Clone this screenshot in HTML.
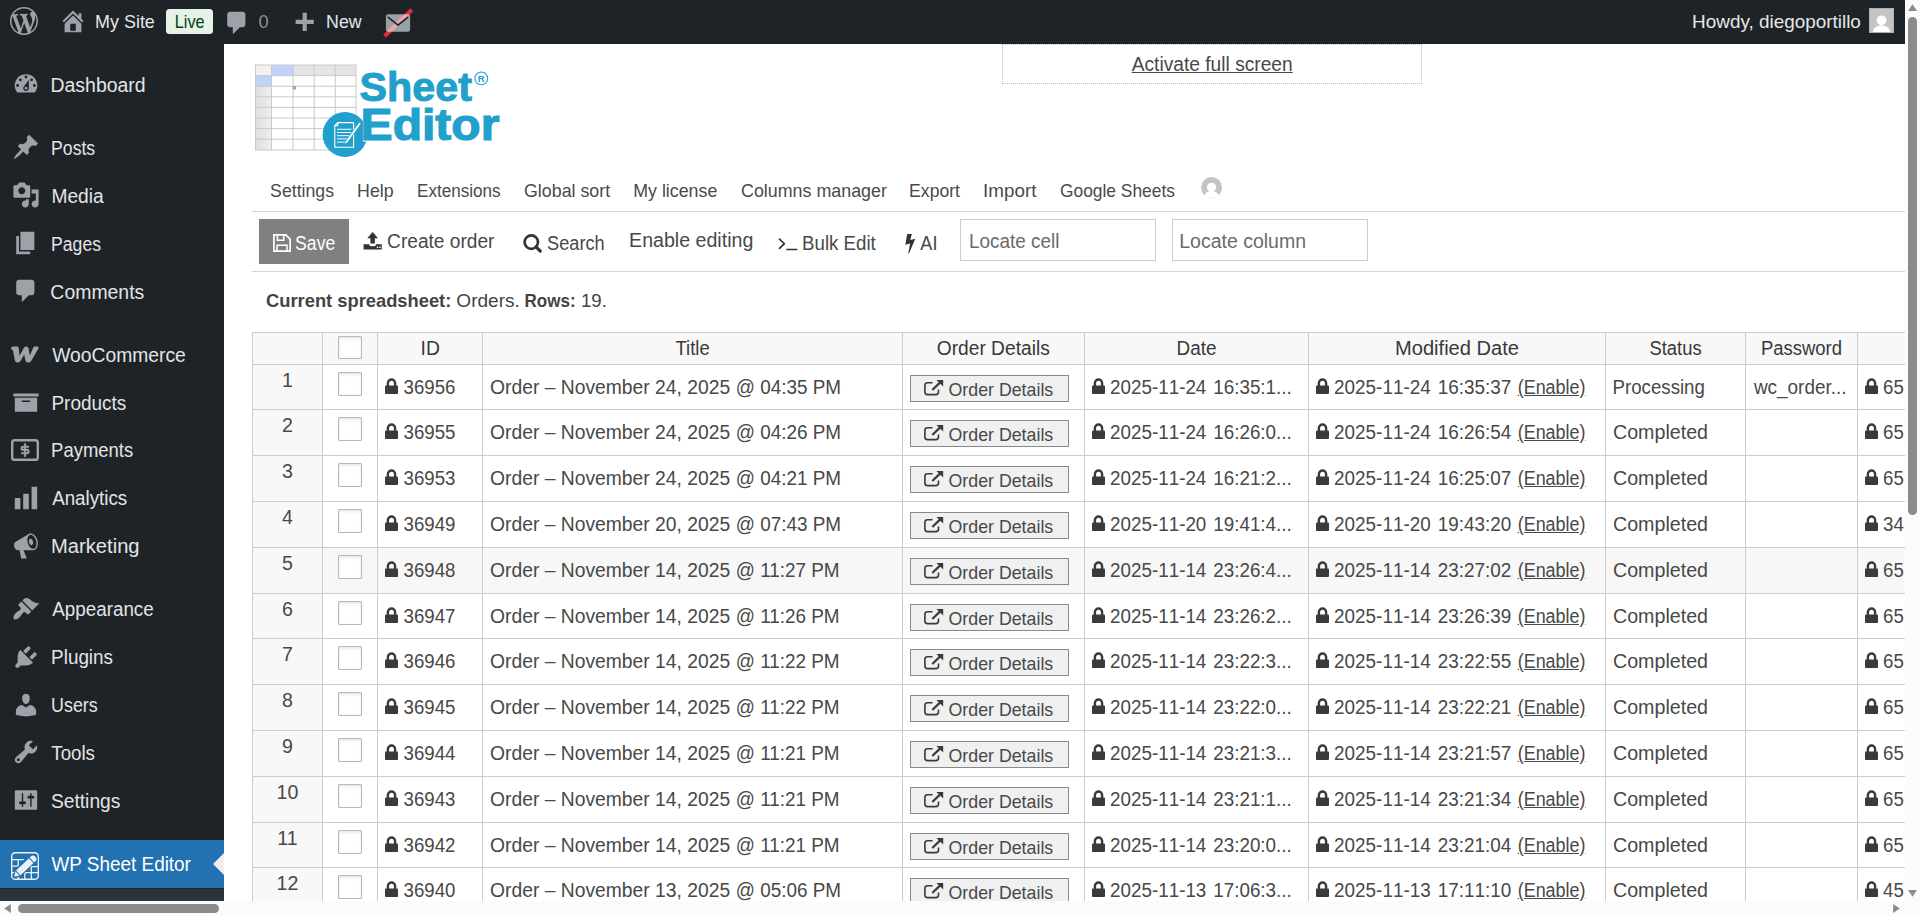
<!DOCTYPE html>
<html lang="en">
<head>
<meta charset="utf-8">
<title>WP Sheet Editor - Orders</title>
<style>
*{box-sizing:border-box}
html,body{margin:0;padding:0}
body{width:1920px;height:916px;overflow:hidden;position:relative;background:#fff;font-family:"Liberation Sans",sans-serif;color:#484848}
.ic{position:absolute;display:block}
#bar{position:absolute;left:0;top:0;width:1905px;height:44px;background:#1d2327;color:#e6e6e8;font-size:18.2px;line-height:44px;white-space:nowrap}
#bar span{position:absolute;top:0}
#bar .live{left:166px;top:9px;width:47px;height:25px;line-height:25px;border-radius:3.5px;background:#e6f2e8;color:#00450c;text-align:center}
#side{position:absolute;left:0;top:44px;width:224px;height:857px;background:#1d2327;overflow:hidden}
.mi{position:absolute;left:0;width:224px;height:47.88px;line-height:47.88px;color:#e4e4e6;font-size:19.6px;white-space:nowrap}
.mi span{position:absolute;left:50.6px;top:0}
.mi.act{color:#fff}
#actbg{position:absolute;left:0;top:796px;width:224px;height:48px;background:#2271b1}
.arr{position:absolute;right:0;top:12.7px;width:0;height:0;border:11.2px solid transparent;border-right-color:#f0f0f1;border-left-width:0}
#sub{position:absolute;left:0;top:844.5px;width:224px;height:20px;background:#2c3338}
#vs{position:absolute;left:1905px;top:0;width:15px;height:916px;background:#fbfbfb}
#hs{position:absolute;left:0;top:901px;width:1905px;height:15px;background:#fbfbfb}
.thumb{position:absolute;background:#8b8b8b;border-radius:5px}
#main{position:absolute;left:224px;top:44px;width:1681px;height:857px;overflow:hidden;background:#fff}
#main>*{position:absolute}
.nav{font-size:18.2px;line-height:22px;top:135px;color:#4a4a4a;white-space:nowrap}
.tl{font-size:19.6px;line-height:24px;color:#484848;white-space:nowrap}
.hl{left:28px;width:1660px;height:1px;background:#d5d5d5}
.inp{height:42px;width:196px;border:1px solid #ccc;background:#fff;font-size:19.6px;line-height:40px;color:#6a6a6a;padding-left:8px;white-space:nowrap}
#tbl{left:28px;top:288px;width:1653px;height:569px;border-left:1px solid #ccc;border-top:1px solid #ccc;overflow:hidden;font-size:19.6px;color:#484848}
.th{position:absolute;top:0;height:32px;background:#f8f8f8;border-right:1px solid #ccc;border-bottom:1px solid #ccc;text-align:center;line-height:29px;color:#383838;white-space:nowrap;overflow:hidden}
.tr{position:absolute;left:0;width:1700px}
.td,.rh{position:absolute;top:0;height:100%;border-right:1px solid #ccc;border-bottom:1px solid #ccc;white-space:nowrap;overflow:hidden;line-height:43px;padding-left:7px}
.rh{background:#f8f8f8;text-align:center;padding:0;line-height:30px;color:#484848}
.hov .td{background:#f7f7f7}
.cb{position:absolute;width:24px;height:23px;border:1px solid #b4b9be;background:#fff;border-radius:1px;box-shadow:inset 0 1.4px 2.8px rgba(0,0,0,.1)}
.lk{display:inline-block;vertical-align:-1px;margin-right:6px}
.btn{position:absolute;left:7px;top:10px;width:159px;height:27px;border:1px solid #8a8a8a;background:#f0f0f0;font-size:18.2px;line-height:26px;padding-left:38px}
.ex{position:absolute;left:13.2px;top:4.3px}
u{text-decoration:underline;text-underline-offset:1.3px}
.a4,.a5,.a1,.a8{font-kerning:none}
.a4,.a5{word-spacing:1.8px}
#b1{display:inline-block;transform:translate(-0.90px,0.00px) scaleX(0.9850);transform-origin:0 50%}
#b2{display:inline-block;transform:translate(0.00px,1.00px) scaleX(0.8935);transform-origin:50% 50%}
#b3{display:inline-block;transform:translate(0.00px,0.00px) scaleX(1.0000);transform-origin:0 50%}
#b4{display:inline-block;transform:translate(-0.90px,0.00px) scaleX(0.9765);transform-origin:0 50%}
#b5{display:inline-block;transform:translate(-0.90px,0.00px) scaleX(1.0389);transform-origin:0 50%}
#s1{display:inline-block;transform:translate(-0.45px,1.00px) scaleX(0.9911);transform-origin:0 50%}
#s2{display:inline-block;transform:translate(0.09px,1.00px) scaleX(0.8989);transform-origin:0 50%}
#s3{display:inline-block;transform:translate(0.45px,1.00px) scaleX(0.9794);transform-origin:0 50%}
#s4{display:inline-block;transform:translate(0.09px,1.00px) scaleX(0.8982);transform-origin:0 50%}
#s5{display:inline-block;transform:translate(-0.63px,1.00px) scaleX(0.9913);transform-origin:0 50%}
#s6{display:inline-block;transform:translate(1.17px,1.00px) scaleX(0.9843);transform-origin:0 50%}
#s7{display:inline-block;transform:translate(0.45px,1.00px) scaleX(0.9686);transform-origin:0 50%}
#s8{display:inline-block;transform:translate(0.09px,0.00px) scaleX(0.9426);transform-origin:0 50%}
#s9{display:inline-block;transform:translate(1.17px,0.00px) scaleX(0.9575);transform-origin:0 50%}
#s10{display:inline-block;transform:translate(0.09px,0.00px) scaleX(1.0283);transform-origin:0 50%}
#s11{display:inline-block;transform:translate(1.17px,0.00px) scaleX(0.9612);transform-origin:0 50%}
#s12{display:inline-block;transform:translate(0.09px,0.00px) scaleX(0.9635);transform-origin:0 50%}
#s13{display:inline-block;transform:translate(0.09px,0.00px) scaleX(0.9115);transform-origin:0 50%}
#s14{display:inline-block;transform:translate(0.27px,1.00px) scaleX(0.9551);transform-origin:0 50%}
#s15{display:inline-block;transform:translate(-0.09px,1.00px) scaleX(0.9813);transform-origin:0 50%}
#s16{display:inline-block;transform:translate(0.45px,0.00px) scaleX(0.9653);transform-origin:0 50%}
#n1{display:inline-block;transform:translate(-0.90px,1.00px) scaleX(0.9727);transform-origin:0 50%}
#n2{display:inline-block;transform:translate(-0.90px,1.00px) scaleX(0.9757);transform-origin:0 50%}
#n3{display:inline-block;transform:translate(-0.90px,1.00px) scaleX(0.9393);transform-origin:0 50%}
#n4{display:inline-block;transform:translate(0.00px,1.00px) scaleX(0.9798);transform-origin:0 50%}
#n5{display:inline-block;transform:translate(-1.80px,1.00px) scaleX(0.9790);transform-origin:0 50%}
#n6{display:inline-block;transform:translate(0.00px,1.00px) scaleX(0.9819);transform-origin:0 50%}
#n7{display:inline-block;transform:translate(-0.90px,1.00px) scaleX(0.9671);transform-origin:0 50%}
#n8{display:inline-block;transform:translate(-0.90px,1.00px) scaleX(1.0353);transform-origin:0 50%}
#n9{display:inline-block;transform:translate(0.00px,1.00px) scaleX(0.9553);transform-origin:0 50%}
#t1{display:inline-block;transform:translate(-0.90px,0.00px) scaleX(0.9003);transform-origin:0 50%}
#t2{display:inline-block;transform:translate(-0.90px,0.00px) scaleX(0.9758);transform-origin:0 50%}
#t3{display:inline-block;transform:translate(-0.90px,0.00px) scaleX(0.9275);transform-origin:0 50%}
#t4{display:inline-block;transform:translate(-0.90px,0.00px) scaleX(1.0003);transform-origin:0 50%}
#t5{display:inline-block;transform:translate(-0.90px,0.00px) scaleX(0.9532);transform-origin:0 50%}
#t6{display:inline-block;transform:translate(-0.63px,0.00px) scaleX(0.9228);transform-origin:0 50%}
#i1{display:inline-block;line-height:normal;transform:translate(0.00px,1.00px) scaleX(0.9644);transform-origin:0 50%}
#i2{display:inline-block;line-height:normal;transform:translate(-1.80px,1.00px) scaleX(0.9954);transform-origin:0 50%}
#c1{display:inline-block;line-height:normal;transform:translate(0.00px,1.00px) scaleX(1.0075);transform-origin:0 50%}
#c2{display:inline-block;line-height:normal;transform:translate(1.35px,1.00px) scaleX(1.0476);transform-origin:0 50%}
#c3{display:inline-block;line-height:normal;transform:translate(3.60px,1.00px) scaleX(0.9334);transform-origin:0 50%}
#c4{display:inline-block;line-height:normal;transform:translate(0.90px,1.00px) scaleX(1.0258);transform-origin:0 50%}
#afs{display:inline-block;line-height:normal;transform:translate(0.00px,0.00px) scaleX(0.9789);transform-origin:50% 50%}
#h2{display:inline-block;line-height:normal;transform:translate(0.45px,1.00px) scaleX(0.9863);transform-origin:50% 50%}
#h3{display:inline-block;line-height:normal;transform:translate(0.45px,1.00px) scaleX(0.9383);transform-origin:50% 50%}
#h4{display:inline-block;line-height:normal;transform:translate(-0.45px,1.00px) scaleX(0.9788);transform-origin:50% 50%}
#h5{display:inline-block;line-height:normal;transform:translate(-0.22px,1.00px) scaleX(0.9634);transform-origin:50% 50%}
#h6{display:inline-block;line-height:normal;transform:translate(-0.45px,1.00px) scaleX(1.0254);transform-origin:50% 50%}
#h7{display:inline-block;line-height:normal;transform:translate(-0.22px,1.00px) scaleX(0.9383);transform-origin:50% 50%}
#h8{display:inline-block;line-height:normal;transform:translate(0.45px,1.00px) scaleX(0.9424);transform-origin:50% 50%}
.a1{display:inline-block;line-height:normal;transform:translate(-0.45px,1.00px) scaleX(0.9525);transform-origin:0 50%}
.a8{display:inline-block;line-height:normal;transform:translate(-0.95px,1.00px) scaleX(0.9525);transform-origin:0 50%}
.a2{display:inline-block;line-height:normal;transform:translate(-0.00px,1.00px) scaleX(0.9843);transform-origin:0 50%}
.a3{display:inline-block;line-height:normal;transform:translate(-0.45px,1.00px) scaleX(0.9769);transform-origin:0 50%}
.a4{display:inline-block;line-height:normal;transform:translate(-0.90px,1.00px) scaleX(0.9601);transform-origin:0 50%}
.a5{display:inline-block;line-height:normal;transform:translate(-0.90px,1.00px) scaleX(0.9638);transform-origin:0 50%}
.a6p{display:inline-block;line-height:normal;transform:translate(-0.45px,1.00px) scaleX(0.9526);transform-origin:0 50%}
.a6{display:inline-block;line-height:normal;transform:translate(0.00px,1.00px) scaleX(1.0028);transform-origin:0 50%}
.a7{display:inline-block;line-height:normal;transform:translate(0.90px,1.00px) scaleX(0.9660);transform-origin:0 50%}
.a5e{display:inline-block;line-height:normal;transform:translate(-6.30px,1.00px) scaleX(0.9156);transform-origin:0 50%}
.a2b{display:inline-block;line-height:normal;transform:translate(-3.24px,1.00px) scaleX(0.9635);transform-origin:0 50%}
</style>
</head>
<body>
<div id="bar">
<svg class="ic" style="left:9.8px;top:7px" width="28" height="28" viewBox="0 0 20 20"><path fill="#9ca2a7" d="M20 10c0-5.51-4.49-10-10-10C4.48 0 0 4.49 0 10c0 5.52 4.48 10 10 10 5.51 0 10-4.48 10-10zM7.78 15.37L4.37 6.22c.55-.02 1.17-.08 1.17-.08.5-.06.44-1.13-.06-1.11 0 0-1.45.11-2.37.11-.18 0-.37 0-.58-.01C4.12 2.69 6.87 1.11 10 1.11c2.33 0 4.45.87 6.05 2.34-.68-.11-1.65.39-1.65 1.58 0 .74.45 1.36.9 2.1.35.61.55 1.36.55 2.46 0 1.49-1.4 5-1.4 5l-3.03-8.37c.54-.02.82-.17.82-.17.5-.05.44-1.25-.06-1.22 0 0-1.44.12-2.38.12-.87 0-2.33-.12-2.33-.12-.5-.03-.56 1.2-.06 1.22l.92.08 1.26 3.41zM17.41 10c.24-.64.74-1.87.43-4.25.7 1.29 1.05 2.71 1.05 4.25 0 3.29-1.73 6.24-4.4 7.78.97-2.59 1.94-5.2 2.92-7.78zM6.1 18.09C3.12 16.65 1.11 13.53 1.11 10c0-1.3.23-2.48.72-3.59C3.25 10.3 4.67 14.2 6.1 18.09zm4.03-6.63l2.58 6.98c-.86.29-1.76.45-2.71.45-.79 0-1.57-.11-2.29-.33.81-2.38 1.62-4.74 2.42-7.1z"/></svg>
<svg class="ic" style="left:58.8px;top:6.8px" width="28" height="28" viewBox="0 0 20 20"><path fill="#9ca2a7" d="M16 8.5l1.53 1.53-1.06 1.06L10 4.62l-6.47 6.47-1.06-1.06L10 2.5l4 4v-2h2v4zm-6-2.46l6 5.99V18H4v-5.97zM12 17v-5H8v5h4z"/></svg>
<span id="b1" style="left:95.5px">My Site</span>
<span class="live"><span id="b2" style="position:static">Live</span></span>
<svg class="ic" style="left:222.6px;top:9.1px" width="28" height="28" viewBox="0 0 20 20"><path fill="#9ca2a7" d="M5 2h9c1.1 0 2 .9 2 2v7c0 1.1-.9 2-2 2h-2l-5 5v-5H5c-1.1 0-2-.9-2-2V4c0-1.1.9-2 2-2z"/></svg>
<span id="b3" style="left:258.5px;color:#8c8f92">0</span>
<svg class="ic" style="left:290.3px;top:10.2px" width="28" height="28" viewBox="0 0 20 20"><path fill="#9ca2a7" d="M17 7v3h-5v5H9v-5H4V7h5V2h3v5h5z"/></svg>
<span id="b4" style="left:326.5px">New</span>
<svg class="ic" style="left:380px;top:6px" width="36" height="34" viewBox="380 6 36 34"><path d="M384.600 36.200L411.800 9.700" stroke="#e02f34" stroke-width="4.200" fill="none"/><rect x="385.900" y="14.200" width="24.200" height="17.500" rx="2.200" fill="rgba(240,246,252,.6)"/><path d="M388.300 17.400L398 25.200L407.700 17.400" fill="none" stroke="#1d2327" stroke-width="1.700" stroke-linecap="round" stroke-linejoin="round"/></svg>
<span id="b5" style="left:1692.5px">Howdy, diegoportillo</span>
<svg class="ic" style="left:1869px;top:8px" width="25" height="25" viewBox="0 0 25 25"><rect width="25" height="25" fill="#c4c4c4"/><circle cx="12.5" cy="12.3" r="4.9" fill="#fff"/><path d="M3.8 25c0-5.2 3.6-7.6 8.7-7.6s8.7 2.4 8.7 7.6z" fill="#fff"/><rect x=".5" y=".5" width="24" height="24" fill="none" stroke="#b0b0b0"/></svg>
</div>
<div id="side">
<div id="sub"></div><div id="actbg"></div>
<div class="mi" style="top:16.80px"><svg class="ic" style="left:11.5px;top:9.04px" width="28" height="28" viewBox="0 0 20 20"><path fill="#9ca2a7" d="M3.76 16h12.48A7.998 7.998 0 0 0 10 3a7.998 7.998 0 0 0-6.24 13zM10 4c.55 0 1 .45 1 1s-.45 1-1 1-1-.45-1-1 .45-1 1-1zM6 6c.55 0 1 .45 1 1s-.45 1-1 1-1-.45-1-1 .45-1 1-1zm8 0c.55 0 1 .45 1 1s-.45 1-1 1-1-.45-1-1 .45-1 1-1zm-5.37 5.55L12 7v6c0 1.1-.9 2-2 2s-2-.9-2-2c0-.57.24-1.08.63-1.45zM4 10c.55 0 1 .45 1 1s-.45 1-1 1-1-.45-1-1 .45-1 1-1zm12 0c.55 0 1 .45 1 1s-.45 1-1 1-1-.45-1-1 .45-1 1-1zm-5 3c0-.55-.45-1-1-1s-1 .45-1 1 .45 1 1 1 1-.45 1-1z"/></svg><span id="s1">Dashboard</span></div>
<div class="mi" style="top:80.08px"><svg class="ic" style="left:11.5px;top:9.04px" width="28" height="28" viewBox="0 0 20 20"><path fill="#9ca2a7" d="M10.44 3.02l1.82-1.82 6.36 6.35-1.83 1.82c-1.05-.68-2.48-.57-3.41.36l-.75.75c-.92.93-1.04 2.35-.35 3.41l-1.83 1.82-2.41-2.41-2.8 2.79c-.42.42-3.38 2.71-3.8 2.29s1.86-3.39 2.28-3.81l2.79-2.79L4.1 9.36l1.83-1.82c1.05.69 2.48.57 3.4-.36l.75-.75c.93-.92 1.05-2.35.36-3.41z"/></svg><span id="s2">Posts</span></div>
<div class="mi" style="top:127.96px"><svg class="ic" style="left:11.5px;top:9.04px" width="28" height="28" viewBox="0 0 20 20"><path fill="#9ca2a7" d="M13 11V4c0-.55-.45-1-1-1h-1.67L9 1H5L3.67 3H2c-.55 0-1 .45-1 1v7c0 .55.45 1 1 1h10c.55 0 1-.45 1-1zM7 4.5c1.38 0 2.5 1.12 2.5 2.5S8.38 9.5 7 9.5 4.5 8.38 4.5 7 5.62 4.5 7 4.5zM14 6h5v10.5c0 1.38-1.12 2.5-2.5 2.5S14 17.88 14 16.5s1.12-2.5 2.5-2.5c.17 0 .34.02.5.05V9h-3V6zm-4 8.05V13h2v3.5c0 1.38-1.12 2.5-2.5 2.5S7 17.88 7 16.5 8.12 14 9.5 14c.17 0 .34.02.5.05z"/></svg><span id="s3">Media</span></div>
<div class="mi" style="top:175.84px"><svg class="ic" style="left:11.5px;top:9.04px" width="28" height="28" viewBox="0 0 20 20"><path fill="#9ca2a7" d="M6 15V2h10v13H6zm-1 1h8v2H3V5h2v11z"/></svg><span id="s4">Pages</span></div>
<div class="mi" style="top:223.72px"><svg class="ic" style="left:11.5px;top:9.04px" width="28" height="28" viewBox="0 0 20 20"><path fill="#9ca2a7" d="M5 2h9c1.1 0 2 .9 2 2v7c0 1.1-.9 2-2 2h-2l-5 5v-5H5c-1.1 0-2-.9-2-2V4c0-1.1.9-2 2-2z"/></svg><span id="s5">Comments</span></div>
<div class="mi" style="top:287.00px"><svg class="ic" style="left:11px;top:15.44px" width="28" height="17" viewBox="0 0 28 17"><path fill="#9ca2a7" d="M2.2 0.4 C0.9 0.4 0 1.3 0.1 2.5 C0.2 3.3 0.7 3.9 1.5 4.1 L2.0 4.2 L3.6 13.2 C3.9 15.2 5.0 16.6 6.8 16.6 C8.3 16.6 9.3 15.7 10.2 14.1 L13.2 8.4 L14.2 13.4 C14.6 15.4 15.6 16.6 17.3 16.6 C18.9 16.6 19.9 15.7 20.8 14.0 L27.4 2.6 C28.0 1.4 27.4 0.4 26.1 0.4 L24.2 0.4 C23.2 0.4 22.6 0.8 22.2 1.7 L18.8 9.6 L17.6 2.6 C17.3 1.1 16.5 0.4 15.2 0.4 C14.1 0.4 13.3 0.9 12.7 2.0 L8.6 9.8 L7.8 2.2 C7.7 1.0 7.0 0.4 5.8 0.4 Z"/></svg><span id="s6">WooCommerce</span></div>
<div class="mi" style="top:334.88px"><svg class="ic" style="left:11.5px;top:9.04px" width="28" height="28" viewBox="0 0 20 20"><path fill="#9ca2a7" d="M19 4v2H1V4h18zM2 7h16v10H2V7zm11 3V9H7v1h6z"/></svg><span id="s7">Products</span></div>
<div class="mi" style="top:382.76px"><svg class="ic" style="left:11px;top:12.74px" width="28" height="22" viewBox="0 0 28 22"><rect x="1.2" y="1.2" width="25.6" height="19.6" rx="2.4" fill="none" stroke="#9ca2a7" stroke-width="2.4"/><path d="M17.9 7.7H12.3Q10.6 7.7 10.6 9.3Q10.6 10.9 12.3 10.9H15.9Q17.6 10.9 17.6 12.6Q17.6 14.3 15.9 14.3H10.1" fill="none" stroke="#9ca2a7" stroke-width="2.1"/><path d="M14.1 4.3V17.9" stroke="#9ca2a7" stroke-width="1.9"/></svg><span id="s8">Payments</span></div>
<div class="mi" style="top:430.64px"><svg class="ic" style="left:11.5px;top:9.04px" width="28" height="28" viewBox="0 0 20 20"><path fill="#9ca2a7" d="M18 18V2h-4v16h4zm-6 0V7H8v11h4zm-6 0v-8H2v8h4z"/></svg><span id="s9">Analytics</span></div>
<div class="mi" style="top:478.52px"><svg class="ic" style="left:11.5px;top:9.04px" width="28" height="28" viewBox="0 0 20 20"><path fill="#9ca2a7" d="M18.15 5.94c.46 1.62.38 3.22-.02 4.48-.42 1.28-1.26 2.18-2.3 2.48-.16.06-.26.06-.4.06-.06.02-.12.02-.18.02-.06.02-.14.02-.22.02h-6.8l2.22 5.5c.02.14-.06.26-.14.34-.08.1-.24.16-.34.16H6.95c-.1 0-.26-.06-.34-.16-.08-.08-.16-.2-.14-.34l-1-5.5H4.25l-.02-.02c-.5.06-1.08-.18-1.54-.62s-.88-1.08-1.06-1.88c-.24-.8-.2-1.56-.02-2.2.18-.62.58-1.08 1.06-1.3l.02-.02 9-5.4c.1-.06.18-.1.24-.16.06-.04.14-.08.24-.12.16-.08.28-.12.5-.18 1.04-.3 2.24.1 3.22.98s1.84 2.24 2.26 3.86zm-2.58 5.98h-.02c.4-.1.74-.34 1.04-.7.58-.7.86-1.76.86-3.04 0-.64-.1-1.3-.28-1.98-.34-1.36-1.02-2.5-1.78-3.24s-1.68-1.1-2.46-.88c-.82.22-1.4.96-1.7 2-.32 1.04-.28 2.36.06 3.72.38 1.36 1 2.5 1.8 3.24.78.74 1.62 1.1 2.48.88zm-2.54-7.08c.22-.04.42-.02.62.04.38.16.76.48 1.02 1s.42 1.2.42 1.78c0 .3-.04.56-.12.8-.18.48-.44.84-.86.94-.34.1-.8-.06-1.14-.4s-.64-.86-.78-1.5c-.18-.62-.12-1.24.02-1.72s.48-.84.82-.94z"/></svg><span id="s10">Marketing</span></div>
<div class="mi" style="top:541.80px"><svg class="ic" style="left:11.5px;top:9.04px" width="28" height="28" viewBox="0 0 20 20"><path fill="#9ca2a7" d="M14.48 11.06L7.41 3.99l1.5-1.5c.5-.56 2.3-.47 3.51.32 1.21.8 1.43 1.28 2.91 2.1 1.18.64 2.45 1.26 4.45.85zm-.71.71L6.7 4.7 4.93 6.47c-.39.39-.39 1.02 0 1.41l1.06 1.06c.39.39.39 1.03 0 1.42-.6.6-1.43 1.11-2.21 1.69-.35.26-.7.53-1.01.84C1.43 14.23.4 16.08 1.4 17.07c.99 1 2.84-.03 4.18-1.36.31-.31.58-.66.85-1.02.57-.78 1.08-1.61 1.69-2.21.39-.39 1.02-.39 1.41 0l1.06 1.06c.39.39 1.02.39 1.41 0z"/></svg><span id="s11">Appearance</span></div>
<div class="mi" style="top:589.68px"><svg class="ic" style="left:11.5px;top:9.04px" width="28" height="28" viewBox="0 0 20 20"><path fill="#9ca2a7" d="M13.11 4.36L9.87 7.6 8 5.73l3.24-3.24c.35-.34 1.05-.2 1.56.32.52.51.66 1.21.31 1.55zm-8 1.77l.91-1.12 9.01 9.01-1.19.84c-.71.71-2.63 1.16-3.82 1.16H6.14L4.9 17.26c-.59.59-1.54.59-2.12 0-.59-.58-.59-1.53 0-2.12l1.24-1.24v-3.88c0-1.13.4-3.19 1.09-3.89zm7.26 3.97l3.24-3.24c.34-.35 1.04-.21 1.55.31.52.51.66 1.21.31 1.55l-3.24 3.25z"/></svg><span id="s12">Plugins</span></div>
<div class="mi" style="top:637.56px"><svg class="ic" style="left:11.5px;top:9.04px" width="28" height="28" viewBox="0 0 20 20"><path fill="#9ca2a7" d="M10 9.25c-2.27 0-2.73-3.44-2.73-3.44C7 4.02 7.82 2 9.97 2c2.16 0 2.98 2.02 2.71 3.81 0 0-.41 3.44-2.68 3.44zm0 2.57L12.72 10c2.39 0 4.52 2.33 4.52 4.53v2.49s-3.65 1.13-7.24 1.13c-3.65 0-7.24-1.13-7.24-1.13v-2.49c0-2.25 1.94-4.48 4.47-4.48z"/></svg><span id="s13">Users</span></div>
<div class="mi" style="top:685.44px"><svg class="ic" style="left:11.5px;top:9.04px" width="28" height="28" viewBox="0 0 20 20"><path fill="#9ca2a7" d="M16.68 9.77c-1.34 1.34-3.3 1.67-4.95.99l-5.41 6.52c-.99.99-2.59.99-3.58 0s-.99-2.59 0-3.57l6.52-5.42c-.68-1.65-.35-3.61.99-4.95 1.28-1.28 3.12-1.62 4.72-1.06l-2.89 2.89 2.82 2.82 2.86-2.87c.53 1.58.18 3.39-1.08 4.65zM3.81 16.21c.4.39 1.04.39 1.43 0 .4-.4.4-1.04 0-1.43-.39-.4-1.03-.4-1.43 0-.39.39-.39 1.03 0 1.43z"/></svg><span id="s14">Tools</span></div>
<div class="mi" style="top:733.32px"><svg class="ic" style="left:11.5px;top:9.04px" width="28" height="28" viewBox="0 0 20 20"><path fill="#9ca2a7" d="M18 16V4c0-.55-.45-1-1-1H3c-.55 0-1 .45-1 1v12c0 .55.45 1 1 1h14c.55 0 1-.45 1-1zM8 11h1c.55 0 1 .45 1 1s-.45 1-1 1H8v1.5c0 .28-.22.5-.5.5s-.5-.22-.5-.5V13H6c-.55 0-1-.45-1-1s.45-1 1-1h1V5.5c0-.28.22-.5.5-.5s.5.22.5.5V11zm5-2h-1c-.55 0-1-.45-1-1s.45-1 1-1h1V5.5c0-.28.22-.5.5-.5s.5.22.5.5V7h1c.55 0 1 .45 1 1s-.45 1-1 1h-1v5.5c0 .28-.22.5-.5.5s-.5-.22-.5-.5V9z"/></svg><span id="s15">Settings</span></div>
<div class="mi act" style="top:796.60px"><svg class="ic" style="left:11px;top:10.94px" width="28" height="28" viewBox="0 0 28 28"><rect x="0.7" y="0.7" width="26.6" height="26.6" rx="3.6" fill="none" stroke="#f0f0f1" stroke-width="1.4"/><g stroke="#f0f0f1" stroke-width="1.3" fill="none"><path d="M1 7.600H12.700M1 14.200H6.500M20.300 14.600H27M1 20.700H3.200M27 20.700H15Q13.750 20.700 13.750 22V27M7.200 7.600V14.200M7.200 25V27M20.300 14.600V27"/></g><g transform="translate(3.3,24.6) rotate(-43.3)" fill="#f0f0f1" stroke="#2271b1" stroke-width="1.7" paint-order="stroke"><path d="M0 0L4.600 -3.300V3.300Z"/><rect x="5.500" y="-3.300" width="17.800" height="6.600"/><path d="M24.200 -3.300H26A3 3.300 0 0 1 26 3.300H24.200Z"/></g></svg><span id="s16">WP Sheet Editor</span><i class="arr"></i></div>
</div>
<div id="main">
<!-- logo -->
<svg style="left:28px;top:16px" width="260" height="100" viewBox="252 60 260 100">
<defs><linearGradient id="g1" x1="0" x2="1" y1="0" y2="0"><stop offset="0" stop-color="#dedede"/><stop offset="1" stop-color="#efefef"/></linearGradient></defs>
<rect x="255.5" y="65" width="100.5" height="85" fill="#fff"/>
<rect x="255.5" y="65" width="16" height="85" fill="url(#g1)"/>
<rect x="271.5" y="65" width="84.5" height="10.6" fill="#e4e4e4"/>
<rect x="255.5" y="65" width="16" height="10.6" fill="#f1f1f1"/>
<rect x="271.5" y="65" width="21.6" height="10.6" fill="#bfd2f8"/>
<rect x="255.5" y="75.6" width="16" height="10.6" fill="#bfd2f8"/>
<g stroke="#c9c9c9" stroke-width="1" fill="none">
<path d="M255.5 75.6H356M255.5 86.2H356M255.5 96.8H356M255.5 107.4H356M255.5 118H356M255.5 128.6H356M255.5 139.2H356"/>
<path d="M271.5 65V150M293.1 65V150M314.2 65V150M335.3 65V150"/>
<rect x="255.5" y="65" width="100.5" height="85"/>
</g>
<rect x="292.6" y="86" width="3.4" height="3.6" fill="#a9a9a9"/>
<circle cx="345" cy="134.5" r="22.4" fill="#21a0cb"/>
<g fill="none" stroke="#fff" stroke-width="1.1"><path d="M337.8 122.6H353.6V147.2H334.8V125.6Z"/><path d="M337.8 122.6V125.6H334.8"/><path d="M337 129.3H351.5M337 132.5H351.5M337 135.7H351.5M337 138.9H349M337 142.1H346" stroke-width="1"/></g>
<path d="M359.2 122.2L361.2 123.5L347.6 142.6L344.6 144.6L345.3 141.2Z" fill="#fff" stroke="#21a0cb" stroke-width=".8"/>
<text x="359.6" y="100.7" font-family="Liberation Sans, sans-serif" font-weight="700" font-size="40" fill="#21a0cb" stroke="#21a0cb" stroke-width="1" textLength="112.3" lengthAdjust="spacingAndGlyphs">Sheet</text>
<rect x="362.9" y="107.6" width="10" height="34" fill="#fff"/>
<text x="360.6" y="140.1" font-family="Liberation Sans, sans-serif" font-weight="700" font-size="44.5" fill="#21a0cb" textLength="138.8" lengthAdjust="spacingAndGlyphs" stroke="#21a0cb" stroke-width="1.2">Editor</text>
<circle cx="481.3" cy="78.4" r="6.4" fill="none" stroke="#21a0cb" stroke-width="1.1"/>
<text x="481.3" y="82" text-anchor="middle" font-family="Liberation Sans, sans-serif" font-weight="700" font-size="9.5" fill="#21a0cb">R</text>
</svg>
<!-- full screen -->
<div style="left:778px;top:0;width:420px;height:40px;border:1px dotted #bdbdbd;text-align:center;font-size:19.6px;line-height:38px;color:#484848"><u id="afs">Activate full screen</u></div>
<!-- nav -->
<span class="nav" style="left:46.5px" id="n1">Settings</span>
<span class="nav" style="left:134px" id="n2">Help</span>
<span class="nav" style="left:193.5px" id="n3">Extensions</span>
<span class="nav" style="left:300px" id="n4">Global sort</span>
<span class="nav" style="left:410.5px" id="n5">My license</span>
<span class="nav" style="left:517px" id="n6">Columns manager</span>
<span class="nav" style="left:686px" id="n7">Export</span>
<span class="nav" style="left:760px" id="n8">Import</span>
<span class="nav" style="left:836px" id="n9">Google Sheets</span>
<svg style="left:977px;top:133px" width="21" height="21" viewBox="0 0 21 21"><defs><clipPath id="cc"><circle cx="10.5" cy="10.5" r="10.5"/></clipPath></defs><g clip-path="url(#cc)"><rect width="21" height="21" fill="#c4c4c4"/><circle cx="10.5" cy="10.300" r="4.600" fill="#fff"/><path d="M2.500 22c0-5.400 3.500-8 8-8s8 2.600 8 8z" fill="#fff"/></g></svg>
<div class="hl" style="top:167px"></div>
<!-- toolbar -->
<div style="left:35px;top:175px;width:90px;height:45px;background:#808080"></div>
<svg style="left:48.5px;top:190px" width="18" height="18" viewBox="0 0 18 18"><path fill="none" stroke="#fff" stroke-width="1.7" d="M0.9 0.9H12.9L17.1 5.1V17.1H0.9Z"/><path fill="none" stroke="#fff" stroke-width="1.5" d="M4.4 1V6.2H10.8V1M4 17V11.2H14V17"/></svg>
<span class="tl" style="left:71.5px;top:186.5px;color:#fff" id="t1">Save</span>
<svg style="left:139px;top:188px" width="19.3" height="17.8" viewBox="0 0 20 18" preserveAspectRatio="none"><path fill="#333" d="M10 0L15.6 6.2H12.3V11.6H7.7V6.2H4.4ZM0.6 12.4H6.4C6.6 13.6 7.4 14.4 8.6 14.4H11.4C12.6 14.4 13.4 13.6 13.6 12.400H19.4V17.6H0.6ZM14.300 14.700V16.100H15.700V14.700ZM16.800 14.700V16.100H18.200V14.700Z"/></svg>
<span class="tl" style="left:163.5px;top:184.5px" id="t2">Create order</span>
<svg style="left:299px;top:190px" width="19" height="19" viewBox="0 0 19 19"><circle cx="8.3" cy="8.1" r="6.7" fill="none" stroke="#333" stroke-width="2.7"/><path d="M13 12.800L17.300 17.100" stroke="#333" stroke-width="3.100" stroke-linecap="round"/></svg>
<span class="tl" style="left:323.5px;top:186.5px" id="t3">Search</span>
<span class="tl" style="left:406px;top:183.5px" id="t4">Enable editing</span>
<svg style="left:554px;top:193px" width="20" height="14" viewBox="0 0 20 14"><path d="M1 1.6L6.3 6.700L1 11.800M8.300 12.500H19.300" fill="none" stroke="#333" stroke-width="1.7"/></svg>
<span class="tl" style="left:579px;top:186.5px" id="t5">Bulk Edit</span>
<svg style="left:680.5px;top:190px" width="11" height="20" viewBox="0 0 11 20"><path fill="#333" d="M2.200 0L6.800 0 5.300 6 10.300 4.700 4 19.600 3.300 19.300 5.100 9.400 0.300 10.700Z"/></svg>
<span class="tl" style="left:697px;top:186.5px" id="t6">AI</span>
<div class="inp" style="left:736px;top:175px"><span id="i1">Locate cell</span></div>
<div class="inp" style="left:948px;top:175px"><span id="i2">Locate column</span></div>
<div class="hl" style="top:227px"></div>
<span style="left:42px;top:245px;font-size:18.2px;line-height:22px;white-space:nowrap;color:#444" id="cs"><b id="c1">Current spreadsheet:</b> <span id="c2">Orders.</span> <b id="c3">Rows:</b> <span id="c4">19.</span></span>
<!-- table -->
<div id="tbl">
<div class="th" style="left:0px;width:70px"></div>
<div class="th" style="left:70px;width:55px"><i class="cb" style="left:15px;top:3px"></i></div>
<div class="th" style="left:125px;width:105px"><span id="h2">ID</span></div>
<div class="th" style="left:230px;width:420px"><span id="h3">Title</span></div>
<div class="th" style="left:650px;width:182px"><span id="h4">Order Details</span></div>
<div class="th" style="left:832px;width:224px"><span id="h5">Date</span></div>
<div class="th" style="left:1056px;width:297px"><span id="h6">Modified Date</span></div>
<div class="th" style="left:1353px;width:140px"><span id="h7">Status</span></div>
<div class="th" style="left:1493px;width:112px"><span id="h8">Password</span></div>
<div class="th" style="left:1605px;width:60px"></div>
<div class="tr" style="top:32px;height:45px"><div class="rh" style="left:0;width:70px">1</div><div class="td" style="left:70px;width:55px"><i class="cb" style="left:15px;top:7px;height:24px"></i></div><div class="td" style="left:125px;width:105px"><svg class="lk" width="13" height="16" viewBox="0 0 13 16"><rect x="0" y="7.6" width="13" height="8.4" rx="0.9" fill="#3a3a3a"/><path d="M2.9 8V5.1A3.6 3.6 0 0 1 10.1 5.1V8" fill="none" stroke="#3a3a3a" stroke-width="2.4"/></svg><span class="a1">36956</span></div><div class="td" style="left:230px;width:420px"><span class="a2">Order – November 24, 2025</span> <span class="a2b">@ 04:35 PM</span></div><div class="td" style="left:650px;width:182px"><span class="btn"><svg class="ex" width="20" height="16" viewBox="0 0 20 16"><path d="M8.6 2.8H3.5Q0.9 2.8 0.9 5.4V12Q0.9 14.6 3.5 14.6H11.9Q14.5 14.6 14.5 12V9.6" fill="none" stroke="#3a3a3a" stroke-width="1.6"/><path d="M8.3 10L16.2 2.4" stroke="#3a3a3a" stroke-width="2.2" fill="none"/><path fill="#3a3a3a" d="M12.4 0H19.2V6.6Z"/></svg><span class="a3">Order Details</span></span></div><div class="td" style="left:832px;width:224px"><svg class="lk" width="13" height="16" viewBox="0 0 13 16"><rect x="0" y="7.6" width="13" height="8.4" rx="0.9" fill="#3a3a3a"/><path d="M2.9 8V5.1A3.6 3.6 0 0 1 10.1 5.1V8" fill="none" stroke="#3a3a3a" stroke-width="2.4"/></svg><span class="a4">2025-11-24 16:35:1...</span></div><div class="td" style="left:1056px;width:297px"><svg class="lk" width="13" height="16" viewBox="0 0 13 16"><rect x="0" y="7.6" width="13" height="8.4" rx="0.9" fill="#3a3a3a"/><path d="M2.9 8V5.1A3.6 3.6 0 0 1 10.1 5.1V8" fill="none" stroke="#3a3a3a" stroke-width="2.4"/></svg><span class="a5">2025-11-24 16:35:37</span> <u class="a5e">(Enable)</u></div><div class="td" style="left:1353px;width:140px"><span class="a6p">Processing</span></div><div class="td" style="left:1493px;width:112px"><span class="a7">wc_order...</span></div><div class="td" style="left:1605px;width:60px"><svg class="lk" width="13" height="16" viewBox="0 0 13 16"><rect x="0" y="7.6" width="13" height="8.4" rx="0.9" fill="#3a3a3a"/><path d="M2.9 8V5.1A3.6 3.6 0 0 1 10.1 5.1V8" fill="none" stroke="#3a3a3a" stroke-width="2.4"/></svg><span class="a8">65</span></div></div>
<div class="tr" style="top:77px;height:46px"><div class="rh" style="left:0;width:70px">2</div><div class="td" style="left:70px;width:55px"><i class="cb" style="left:15px;top:7px;height:24px"></i></div><div class="td" style="left:125px;width:105px"><svg class="lk" width="13" height="16" viewBox="0 0 13 16"><rect x="0" y="7.6" width="13" height="8.4" rx="0.9" fill="#3a3a3a"/><path d="M2.9 8V5.1A3.6 3.6 0 0 1 10.1 5.1V8" fill="none" stroke="#3a3a3a" stroke-width="2.4"/></svg><span class="a1">36955</span></div><div class="td" style="left:230px;width:420px"><span class="a2">Order – November 24, 2025</span> <span class="a2b">@ 04:26 PM</span></div><div class="td" style="left:650px;width:182px"><span class="btn"><svg class="ex" width="20" height="16" viewBox="0 0 20 16"><path d="M8.6 2.8H3.5Q0.9 2.8 0.9 5.4V12Q0.9 14.6 3.5 14.6H11.9Q14.5 14.6 14.5 12V9.6" fill="none" stroke="#3a3a3a" stroke-width="1.6"/><path d="M8.3 10L16.2 2.4" stroke="#3a3a3a" stroke-width="2.2" fill="none"/><path fill="#3a3a3a" d="M12.4 0H19.2V6.6Z"/></svg><span class="a3">Order Details</span></span></div><div class="td" style="left:832px;width:224px"><svg class="lk" width="13" height="16" viewBox="0 0 13 16"><rect x="0" y="7.6" width="13" height="8.4" rx="0.9" fill="#3a3a3a"/><path d="M2.9 8V5.1A3.6 3.6 0 0 1 10.1 5.1V8" fill="none" stroke="#3a3a3a" stroke-width="2.4"/></svg><span class="a4">2025-11-24 16:26:0...</span></div><div class="td" style="left:1056px;width:297px"><svg class="lk" width="13" height="16" viewBox="0 0 13 16"><rect x="0" y="7.6" width="13" height="8.4" rx="0.9" fill="#3a3a3a"/><path d="M2.9 8V5.1A3.6 3.6 0 0 1 10.1 5.1V8" fill="none" stroke="#3a3a3a" stroke-width="2.4"/></svg><span class="a5">2025-11-24 16:26:54</span> <u class="a5e">(Enable)</u></div><div class="td" style="left:1353px;width:140px"><span class="a6">Completed</span></div><div class="td" style="left:1493px;width:112px"><span class="a7"></span></div><div class="td" style="left:1605px;width:60px"><svg class="lk" width="13" height="16" viewBox="0 0 13 16"><rect x="0" y="7.6" width="13" height="8.4" rx="0.9" fill="#3a3a3a"/><path d="M2.9 8V5.1A3.6 3.6 0 0 1 10.1 5.1V8" fill="none" stroke="#3a3a3a" stroke-width="2.4"/></svg><span class="a8">65</span></div></div>
<div class="tr" style="top:123px;height:46px"><div class="rh" style="left:0;width:70px">3</div><div class="td" style="left:70px;width:55px"><i class="cb" style="left:15px;top:7px;height:24px"></i></div><div class="td" style="left:125px;width:105px"><svg class="lk" width="13" height="16" viewBox="0 0 13 16"><rect x="0" y="7.6" width="13" height="8.4" rx="0.9" fill="#3a3a3a"/><path d="M2.9 8V5.1A3.6 3.6 0 0 1 10.1 5.1V8" fill="none" stroke="#3a3a3a" stroke-width="2.4"/></svg><span class="a1">36953</span></div><div class="td" style="left:230px;width:420px"><span class="a2">Order – November 24, 2025</span> <span class="a2b">@ 04:21 PM</span></div><div class="td" style="left:650px;width:182px"><span class="btn"><svg class="ex" width="20" height="16" viewBox="0 0 20 16"><path d="M8.6 2.8H3.5Q0.9 2.8 0.9 5.4V12Q0.9 14.6 3.5 14.6H11.9Q14.5 14.6 14.5 12V9.6" fill="none" stroke="#3a3a3a" stroke-width="1.6"/><path d="M8.3 10L16.2 2.4" stroke="#3a3a3a" stroke-width="2.2" fill="none"/><path fill="#3a3a3a" d="M12.4 0H19.2V6.6Z"/></svg><span class="a3">Order Details</span></span></div><div class="td" style="left:832px;width:224px"><svg class="lk" width="13" height="16" viewBox="0 0 13 16"><rect x="0" y="7.6" width="13" height="8.4" rx="0.9" fill="#3a3a3a"/><path d="M2.9 8V5.1A3.6 3.6 0 0 1 10.1 5.1V8" fill="none" stroke="#3a3a3a" stroke-width="2.4"/></svg><span class="a4">2025-11-24 16:21:2...</span></div><div class="td" style="left:1056px;width:297px"><svg class="lk" width="13" height="16" viewBox="0 0 13 16"><rect x="0" y="7.6" width="13" height="8.4" rx="0.9" fill="#3a3a3a"/><path d="M2.9 8V5.1A3.6 3.6 0 0 1 10.1 5.1V8" fill="none" stroke="#3a3a3a" stroke-width="2.4"/></svg><span class="a5">2025-11-24 16:25:07</span> <u class="a5e">(Enable)</u></div><div class="td" style="left:1353px;width:140px"><span class="a6">Completed</span></div><div class="td" style="left:1493px;width:112px"><span class="a7"></span></div><div class="td" style="left:1605px;width:60px"><svg class="lk" width="13" height="16" viewBox="0 0 13 16"><rect x="0" y="7.6" width="13" height="8.4" rx="0.9" fill="#3a3a3a"/><path d="M2.9 8V5.1A3.6 3.6 0 0 1 10.1 5.1V8" fill="none" stroke="#3a3a3a" stroke-width="2.4"/></svg><span class="a8">65</span></div></div>
<div class="tr" style="top:169px;height:46px"><div class="rh" style="left:0;width:70px">4</div><div class="td" style="left:70px;width:55px"><i class="cb" style="left:15px;top:7px;height:24px"></i></div><div class="td" style="left:125px;width:105px"><svg class="lk" width="13" height="16" viewBox="0 0 13 16"><rect x="0" y="7.6" width="13" height="8.4" rx="0.9" fill="#3a3a3a"/><path d="M2.9 8V5.1A3.6 3.6 0 0 1 10.1 5.1V8" fill="none" stroke="#3a3a3a" stroke-width="2.4"/></svg><span class="a1">36949</span></div><div class="td" style="left:230px;width:420px"><span class="a2">Order – November 20, 2025</span> <span class="a2b">@ 07:43 PM</span></div><div class="td" style="left:650px;width:182px"><span class="btn"><svg class="ex" width="20" height="16" viewBox="0 0 20 16"><path d="M8.6 2.8H3.5Q0.9 2.8 0.9 5.4V12Q0.9 14.6 3.5 14.6H11.9Q14.5 14.6 14.5 12V9.6" fill="none" stroke="#3a3a3a" stroke-width="1.6"/><path d="M8.3 10L16.2 2.4" stroke="#3a3a3a" stroke-width="2.2" fill="none"/><path fill="#3a3a3a" d="M12.4 0H19.2V6.6Z"/></svg><span class="a3">Order Details</span></span></div><div class="td" style="left:832px;width:224px"><svg class="lk" width="13" height="16" viewBox="0 0 13 16"><rect x="0" y="7.6" width="13" height="8.4" rx="0.9" fill="#3a3a3a"/><path d="M2.9 8V5.1A3.6 3.6 0 0 1 10.1 5.1V8" fill="none" stroke="#3a3a3a" stroke-width="2.4"/></svg><span class="a4">2025-11-20 19:41:4...</span></div><div class="td" style="left:1056px;width:297px"><svg class="lk" width="13" height="16" viewBox="0 0 13 16"><rect x="0" y="7.6" width="13" height="8.4" rx="0.9" fill="#3a3a3a"/><path d="M2.9 8V5.1A3.6 3.6 0 0 1 10.1 5.1V8" fill="none" stroke="#3a3a3a" stroke-width="2.4"/></svg><span class="a5">2025-11-20 19:43:20</span> <u class="a5e">(Enable)</u></div><div class="td" style="left:1353px;width:140px"><span class="a6">Completed</span></div><div class="td" style="left:1493px;width:112px"><span class="a7"></span></div><div class="td" style="left:1605px;width:60px"><svg class="lk" width="13" height="16" viewBox="0 0 13 16"><rect x="0" y="7.6" width="13" height="8.4" rx="0.9" fill="#3a3a3a"/><path d="M2.9 8V5.1A3.6 3.6 0 0 1 10.1 5.1V8" fill="none" stroke="#3a3a3a" stroke-width="2.4"/></svg><span class="a8">34</span></div></div>
<div class="tr hov" style="top:215px;height:46px"><div class="rh" style="left:0;width:70px">5</div><div class="td" style="left:70px;width:55px"><i class="cb" style="left:15px;top:7px;height:24px"></i></div><div class="td" style="left:125px;width:105px"><svg class="lk" width="13" height="16" viewBox="0 0 13 16"><rect x="0" y="7.6" width="13" height="8.4" rx="0.9" fill="#3a3a3a"/><path d="M2.9 8V5.1A3.6 3.6 0 0 1 10.1 5.1V8" fill="none" stroke="#3a3a3a" stroke-width="2.4"/></svg><span class="a1">36948</span></div><div class="td" style="left:230px;width:420px"><span class="a2">Order – November 14, 2025</span> <span class="a2b">@ 11:27 PM</span></div><div class="td" style="left:650px;width:182px"><span class="btn"><svg class="ex" width="20" height="16" viewBox="0 0 20 16"><path d="M8.6 2.8H3.5Q0.9 2.8 0.9 5.4V12Q0.9 14.6 3.5 14.6H11.9Q14.5 14.6 14.5 12V9.6" fill="none" stroke="#3a3a3a" stroke-width="1.6"/><path d="M8.3 10L16.2 2.4" stroke="#3a3a3a" stroke-width="2.2" fill="none"/><path fill="#3a3a3a" d="M12.4 0H19.2V6.6Z"/></svg><span class="a3">Order Details</span></span></div><div class="td" style="left:832px;width:224px"><svg class="lk" width="13" height="16" viewBox="0 0 13 16"><rect x="0" y="7.6" width="13" height="8.4" rx="0.9" fill="#3a3a3a"/><path d="M2.9 8V5.1A3.6 3.6 0 0 1 10.1 5.1V8" fill="none" stroke="#3a3a3a" stroke-width="2.4"/></svg><span class="a4">2025-11-14 23:26:4...</span></div><div class="td" style="left:1056px;width:297px"><svg class="lk" width="13" height="16" viewBox="0 0 13 16"><rect x="0" y="7.6" width="13" height="8.4" rx="0.9" fill="#3a3a3a"/><path d="M2.9 8V5.1A3.6 3.6 0 0 1 10.1 5.1V8" fill="none" stroke="#3a3a3a" stroke-width="2.4"/></svg><span class="a5">2025-11-14 23:27:02</span> <u class="a5e">(Enable)</u></div><div class="td" style="left:1353px;width:140px"><span class="a6">Completed</span></div><div class="td" style="left:1493px;width:112px"><span class="a7"></span></div><div class="td" style="left:1605px;width:60px"><svg class="lk" width="13" height="16" viewBox="0 0 13 16"><rect x="0" y="7.6" width="13" height="8.4" rx="0.9" fill="#3a3a3a"/><path d="M2.9 8V5.1A3.6 3.6 0 0 1 10.1 5.1V8" fill="none" stroke="#3a3a3a" stroke-width="2.4"/></svg><span class="a8">65</span></div></div>
<div class="tr" style="top:261px;height:45px"><div class="rh" style="left:0;width:70px">6</div><div class="td" style="left:70px;width:55px"><i class="cb" style="left:15px;top:7px;height:24px"></i></div><div class="td" style="left:125px;width:105px"><svg class="lk" width="13" height="16" viewBox="0 0 13 16"><rect x="0" y="7.6" width="13" height="8.4" rx="0.9" fill="#3a3a3a"/><path d="M2.9 8V5.1A3.6 3.6 0 0 1 10.1 5.1V8" fill="none" stroke="#3a3a3a" stroke-width="2.4"/></svg><span class="a1">36947</span></div><div class="td" style="left:230px;width:420px"><span class="a2">Order – November 14, 2025</span> <span class="a2b">@ 11:26 PM</span></div><div class="td" style="left:650px;width:182px"><span class="btn"><svg class="ex" width="20" height="16" viewBox="0 0 20 16"><path d="M8.6 2.8H3.5Q0.9 2.8 0.9 5.4V12Q0.9 14.6 3.5 14.6H11.9Q14.5 14.6 14.5 12V9.6" fill="none" stroke="#3a3a3a" stroke-width="1.6"/><path d="M8.3 10L16.2 2.4" stroke="#3a3a3a" stroke-width="2.2" fill="none"/><path fill="#3a3a3a" d="M12.4 0H19.2V6.6Z"/></svg><span class="a3">Order Details</span></span></div><div class="td" style="left:832px;width:224px"><svg class="lk" width="13" height="16" viewBox="0 0 13 16"><rect x="0" y="7.6" width="13" height="8.4" rx="0.9" fill="#3a3a3a"/><path d="M2.9 8V5.1A3.6 3.6 0 0 1 10.1 5.1V8" fill="none" stroke="#3a3a3a" stroke-width="2.4"/></svg><span class="a4">2025-11-14 23:26:2...</span></div><div class="td" style="left:1056px;width:297px"><svg class="lk" width="13" height="16" viewBox="0 0 13 16"><rect x="0" y="7.6" width="13" height="8.4" rx="0.9" fill="#3a3a3a"/><path d="M2.9 8V5.1A3.6 3.6 0 0 1 10.1 5.1V8" fill="none" stroke="#3a3a3a" stroke-width="2.4"/></svg><span class="a5">2025-11-14 23:26:39</span> <u class="a5e">(Enable)</u></div><div class="td" style="left:1353px;width:140px"><span class="a6">Completed</span></div><div class="td" style="left:1493px;width:112px"><span class="a7"></span></div><div class="td" style="left:1605px;width:60px"><svg class="lk" width="13" height="16" viewBox="0 0 13 16"><rect x="0" y="7.6" width="13" height="8.4" rx="0.9" fill="#3a3a3a"/><path d="M2.9 8V5.1A3.6 3.6 0 0 1 10.1 5.1V8" fill="none" stroke="#3a3a3a" stroke-width="2.4"/></svg><span class="a8">65</span></div></div>
<div class="tr" style="top:306px;height:46px"><div class="rh" style="left:0;width:70px">7</div><div class="td" style="left:70px;width:55px"><i class="cb" style="left:15px;top:7px;height:24px"></i></div><div class="td" style="left:125px;width:105px"><svg class="lk" width="13" height="16" viewBox="0 0 13 16"><rect x="0" y="7.6" width="13" height="8.4" rx="0.9" fill="#3a3a3a"/><path d="M2.9 8V5.1A3.6 3.6 0 0 1 10.1 5.1V8" fill="none" stroke="#3a3a3a" stroke-width="2.4"/></svg><span class="a1">36946</span></div><div class="td" style="left:230px;width:420px"><span class="a2">Order – November 14, 2025</span> <span class="a2b">@ 11:22 PM</span></div><div class="td" style="left:650px;width:182px"><span class="btn"><svg class="ex" width="20" height="16" viewBox="0 0 20 16"><path d="M8.6 2.8H3.5Q0.9 2.8 0.9 5.4V12Q0.9 14.6 3.5 14.6H11.9Q14.5 14.6 14.5 12V9.6" fill="none" stroke="#3a3a3a" stroke-width="1.6"/><path d="M8.3 10L16.2 2.4" stroke="#3a3a3a" stroke-width="2.2" fill="none"/><path fill="#3a3a3a" d="M12.4 0H19.2V6.6Z"/></svg><span class="a3">Order Details</span></span></div><div class="td" style="left:832px;width:224px"><svg class="lk" width="13" height="16" viewBox="0 0 13 16"><rect x="0" y="7.6" width="13" height="8.4" rx="0.9" fill="#3a3a3a"/><path d="M2.9 8V5.1A3.6 3.6 0 0 1 10.1 5.1V8" fill="none" stroke="#3a3a3a" stroke-width="2.4"/></svg><span class="a4">2025-11-14 23:22:3...</span></div><div class="td" style="left:1056px;width:297px"><svg class="lk" width="13" height="16" viewBox="0 0 13 16"><rect x="0" y="7.6" width="13" height="8.4" rx="0.9" fill="#3a3a3a"/><path d="M2.9 8V5.1A3.6 3.6 0 0 1 10.1 5.1V8" fill="none" stroke="#3a3a3a" stroke-width="2.4"/></svg><span class="a5">2025-11-14 23:22:55</span> <u class="a5e">(Enable)</u></div><div class="td" style="left:1353px;width:140px"><span class="a6">Completed</span></div><div class="td" style="left:1493px;width:112px"><span class="a7"></span></div><div class="td" style="left:1605px;width:60px"><svg class="lk" width="13" height="16" viewBox="0 0 13 16"><rect x="0" y="7.6" width="13" height="8.4" rx="0.9" fill="#3a3a3a"/><path d="M2.9 8V5.1A3.6 3.6 0 0 1 10.1 5.1V8" fill="none" stroke="#3a3a3a" stroke-width="2.4"/></svg><span class="a8">65</span></div></div>
<div class="tr" style="top:352px;height:46px"><div class="rh" style="left:0;width:70px">8</div><div class="td" style="left:70px;width:55px"><i class="cb" style="left:15px;top:7px;height:24px"></i></div><div class="td" style="left:125px;width:105px"><svg class="lk" width="13" height="16" viewBox="0 0 13 16"><rect x="0" y="7.6" width="13" height="8.4" rx="0.9" fill="#3a3a3a"/><path d="M2.9 8V5.1A3.6 3.6 0 0 1 10.1 5.1V8" fill="none" stroke="#3a3a3a" stroke-width="2.4"/></svg><span class="a1">36945</span></div><div class="td" style="left:230px;width:420px"><span class="a2">Order – November 14, 2025</span> <span class="a2b">@ 11:22 PM</span></div><div class="td" style="left:650px;width:182px"><span class="btn"><svg class="ex" width="20" height="16" viewBox="0 0 20 16"><path d="M8.6 2.8H3.5Q0.9 2.8 0.9 5.4V12Q0.9 14.6 3.5 14.6H11.9Q14.5 14.6 14.5 12V9.6" fill="none" stroke="#3a3a3a" stroke-width="1.6"/><path d="M8.3 10L16.2 2.4" stroke="#3a3a3a" stroke-width="2.2" fill="none"/><path fill="#3a3a3a" d="M12.4 0H19.2V6.6Z"/></svg><span class="a3">Order Details</span></span></div><div class="td" style="left:832px;width:224px"><svg class="lk" width="13" height="16" viewBox="0 0 13 16"><rect x="0" y="7.6" width="13" height="8.4" rx="0.9" fill="#3a3a3a"/><path d="M2.9 8V5.1A3.6 3.6 0 0 1 10.1 5.1V8" fill="none" stroke="#3a3a3a" stroke-width="2.4"/></svg><span class="a4">2025-11-14 23:22:0...</span></div><div class="td" style="left:1056px;width:297px"><svg class="lk" width="13" height="16" viewBox="0 0 13 16"><rect x="0" y="7.6" width="13" height="8.4" rx="0.9" fill="#3a3a3a"/><path d="M2.9 8V5.1A3.6 3.6 0 0 1 10.1 5.1V8" fill="none" stroke="#3a3a3a" stroke-width="2.4"/></svg><span class="a5">2025-11-14 23:22:21</span> <u class="a5e">(Enable)</u></div><div class="td" style="left:1353px;width:140px"><span class="a6">Completed</span></div><div class="td" style="left:1493px;width:112px"><span class="a7"></span></div><div class="td" style="left:1605px;width:60px"><svg class="lk" width="13" height="16" viewBox="0 0 13 16"><rect x="0" y="7.6" width="13" height="8.4" rx="0.9" fill="#3a3a3a"/><path d="M2.9 8V5.1A3.6 3.6 0 0 1 10.1 5.1V8" fill="none" stroke="#3a3a3a" stroke-width="2.4"/></svg><span class="a8">65</span></div></div>
<div class="tr" style="top:398px;height:46px"><div class="rh" style="left:0;width:70px">9</div><div class="td" style="left:70px;width:55px"><i class="cb" style="left:15px;top:7px;height:24px"></i></div><div class="td" style="left:125px;width:105px"><svg class="lk" width="13" height="16" viewBox="0 0 13 16"><rect x="0" y="7.6" width="13" height="8.4" rx="0.9" fill="#3a3a3a"/><path d="M2.9 8V5.1A3.6 3.6 0 0 1 10.1 5.1V8" fill="none" stroke="#3a3a3a" stroke-width="2.4"/></svg><span class="a1">36944</span></div><div class="td" style="left:230px;width:420px"><span class="a2">Order – November 14, 2025</span> <span class="a2b">@ 11:21 PM</span></div><div class="td" style="left:650px;width:182px"><span class="btn"><svg class="ex" width="20" height="16" viewBox="0 0 20 16"><path d="M8.6 2.8H3.5Q0.9 2.8 0.9 5.4V12Q0.9 14.6 3.5 14.6H11.9Q14.5 14.6 14.5 12V9.6" fill="none" stroke="#3a3a3a" stroke-width="1.6"/><path d="M8.3 10L16.2 2.4" stroke="#3a3a3a" stroke-width="2.2" fill="none"/><path fill="#3a3a3a" d="M12.4 0H19.2V6.6Z"/></svg><span class="a3">Order Details</span></span></div><div class="td" style="left:832px;width:224px"><svg class="lk" width="13" height="16" viewBox="0 0 13 16"><rect x="0" y="7.6" width="13" height="8.4" rx="0.9" fill="#3a3a3a"/><path d="M2.9 8V5.1A3.6 3.6 0 0 1 10.1 5.1V8" fill="none" stroke="#3a3a3a" stroke-width="2.4"/></svg><span class="a4">2025-11-14 23:21:3...</span></div><div class="td" style="left:1056px;width:297px"><svg class="lk" width="13" height="16" viewBox="0 0 13 16"><rect x="0" y="7.6" width="13" height="8.4" rx="0.9" fill="#3a3a3a"/><path d="M2.9 8V5.1A3.6 3.6 0 0 1 10.1 5.1V8" fill="none" stroke="#3a3a3a" stroke-width="2.4"/></svg><span class="a5">2025-11-14 23:21:57</span> <u class="a5e">(Enable)</u></div><div class="td" style="left:1353px;width:140px"><span class="a6">Completed</span></div><div class="td" style="left:1493px;width:112px"><span class="a7"></span></div><div class="td" style="left:1605px;width:60px"><svg class="lk" width="13" height="16" viewBox="0 0 13 16"><rect x="0" y="7.6" width="13" height="8.4" rx="0.9" fill="#3a3a3a"/><path d="M2.9 8V5.1A3.6 3.6 0 0 1 10.1 5.1V8" fill="none" stroke="#3a3a3a" stroke-width="2.4"/></svg><span class="a8">65</span></div></div>
<div class="tr" style="top:444px;height:46px"><div class="rh" style="left:0;width:70px">10</div><div class="td" style="left:70px;width:55px"><i class="cb" style="left:15px;top:7px;height:24px"></i></div><div class="td" style="left:125px;width:105px"><svg class="lk" width="13" height="16" viewBox="0 0 13 16"><rect x="0" y="7.6" width="13" height="8.4" rx="0.9" fill="#3a3a3a"/><path d="M2.9 8V5.1A3.6 3.6 0 0 1 10.1 5.1V8" fill="none" stroke="#3a3a3a" stroke-width="2.4"/></svg><span class="a1">36943</span></div><div class="td" style="left:230px;width:420px"><span class="a2">Order – November 14, 2025</span> <span class="a2b">@ 11:21 PM</span></div><div class="td" style="left:650px;width:182px"><span class="btn"><svg class="ex" width="20" height="16" viewBox="0 0 20 16"><path d="M8.6 2.8H3.5Q0.9 2.8 0.9 5.4V12Q0.9 14.6 3.5 14.6H11.9Q14.5 14.6 14.5 12V9.6" fill="none" stroke="#3a3a3a" stroke-width="1.6"/><path d="M8.3 10L16.2 2.4" stroke="#3a3a3a" stroke-width="2.2" fill="none"/><path fill="#3a3a3a" d="M12.4 0H19.2V6.6Z"/></svg><span class="a3">Order Details</span></span></div><div class="td" style="left:832px;width:224px"><svg class="lk" width="13" height="16" viewBox="0 0 13 16"><rect x="0" y="7.6" width="13" height="8.4" rx="0.9" fill="#3a3a3a"/><path d="M2.9 8V5.1A3.6 3.6 0 0 1 10.1 5.1V8" fill="none" stroke="#3a3a3a" stroke-width="2.4"/></svg><span class="a4">2025-11-14 23:21:1...</span></div><div class="td" style="left:1056px;width:297px"><svg class="lk" width="13" height="16" viewBox="0 0 13 16"><rect x="0" y="7.6" width="13" height="8.4" rx="0.9" fill="#3a3a3a"/><path d="M2.9 8V5.1A3.6 3.6 0 0 1 10.1 5.1V8" fill="none" stroke="#3a3a3a" stroke-width="2.4"/></svg><span class="a5">2025-11-14 23:21:34</span> <u class="a5e">(Enable)</u></div><div class="td" style="left:1353px;width:140px"><span class="a6">Completed</span></div><div class="td" style="left:1493px;width:112px"><span class="a7"></span></div><div class="td" style="left:1605px;width:60px"><svg class="lk" width="13" height="16" viewBox="0 0 13 16"><rect x="0" y="7.6" width="13" height="8.4" rx="0.9" fill="#3a3a3a"/><path d="M2.9 8V5.1A3.6 3.6 0 0 1 10.1 5.1V8" fill="none" stroke="#3a3a3a" stroke-width="2.4"/></svg><span class="a8">65</span></div></div>
<div class="tr" style="top:490px;height:45px"><div class="rh" style="left:0;width:70px">11</div><div class="td" style="left:70px;width:55px"><i class="cb" style="left:15px;top:7px;height:24px"></i></div><div class="td" style="left:125px;width:105px"><svg class="lk" width="13" height="16" viewBox="0 0 13 16"><rect x="0" y="7.6" width="13" height="8.4" rx="0.9" fill="#3a3a3a"/><path d="M2.9 8V5.1A3.6 3.6 0 0 1 10.1 5.1V8" fill="none" stroke="#3a3a3a" stroke-width="2.4"/></svg><span class="a1">36942</span></div><div class="td" style="left:230px;width:420px"><span class="a2">Order – November 14, 2025</span> <span class="a2b">@ 11:21 PM</span></div><div class="td" style="left:650px;width:182px"><span class="btn"><svg class="ex" width="20" height="16" viewBox="0 0 20 16"><path d="M8.6 2.8H3.5Q0.9 2.8 0.9 5.4V12Q0.9 14.6 3.5 14.6H11.9Q14.5 14.6 14.5 12V9.6" fill="none" stroke="#3a3a3a" stroke-width="1.6"/><path d="M8.3 10L16.2 2.4" stroke="#3a3a3a" stroke-width="2.2" fill="none"/><path fill="#3a3a3a" d="M12.4 0H19.2V6.6Z"/></svg><span class="a3">Order Details</span></span></div><div class="td" style="left:832px;width:224px"><svg class="lk" width="13" height="16" viewBox="0 0 13 16"><rect x="0" y="7.6" width="13" height="8.4" rx="0.9" fill="#3a3a3a"/><path d="M2.9 8V5.1A3.6 3.6 0 0 1 10.1 5.1V8" fill="none" stroke="#3a3a3a" stroke-width="2.4"/></svg><span class="a4">2025-11-14 23:20:0...</span></div><div class="td" style="left:1056px;width:297px"><svg class="lk" width="13" height="16" viewBox="0 0 13 16"><rect x="0" y="7.6" width="13" height="8.4" rx="0.9" fill="#3a3a3a"/><path d="M2.9 8V5.1A3.6 3.6 0 0 1 10.1 5.1V8" fill="none" stroke="#3a3a3a" stroke-width="2.4"/></svg><span class="a5">2025-11-14 23:21:04</span> <u class="a5e">(Enable)</u></div><div class="td" style="left:1353px;width:140px"><span class="a6">Completed</span></div><div class="td" style="left:1493px;width:112px"><span class="a7"></span></div><div class="td" style="left:1605px;width:60px"><svg class="lk" width="13" height="16" viewBox="0 0 13 16"><rect x="0" y="7.6" width="13" height="8.4" rx="0.9" fill="#3a3a3a"/><path d="M2.9 8V5.1A3.6 3.6 0 0 1 10.1 5.1V8" fill="none" stroke="#3a3a3a" stroke-width="2.4"/></svg><span class="a8">65</span></div></div>
<div class="tr" style="top:535px;height:46px"><div class="rh" style="left:0;width:70px">12</div><div class="td" style="left:70px;width:55px"><i class="cb" style="left:15px;top:7px;height:24px"></i></div><div class="td" style="left:125px;width:105px"><svg class="lk" width="13" height="16" viewBox="0 0 13 16"><rect x="0" y="7.6" width="13" height="8.4" rx="0.9" fill="#3a3a3a"/><path d="M2.9 8V5.1A3.6 3.6 0 0 1 10.1 5.1V8" fill="none" stroke="#3a3a3a" stroke-width="2.4"/></svg><span class="a1">36940</span></div><div class="td" style="left:230px;width:420px"><span class="a2">Order – November 13, 2025</span> <span class="a2b">@ 05:06 PM</span></div><div class="td" style="left:650px;width:182px"><span class="btn"><svg class="ex" width="20" height="16" viewBox="0 0 20 16"><path d="M8.6 2.8H3.5Q0.9 2.8 0.9 5.4V12Q0.9 14.6 3.5 14.6H11.9Q14.5 14.6 14.5 12V9.6" fill="none" stroke="#3a3a3a" stroke-width="1.6"/><path d="M8.3 10L16.2 2.4" stroke="#3a3a3a" stroke-width="2.2" fill="none"/><path fill="#3a3a3a" d="M12.4 0H19.2V6.6Z"/></svg><span class="a3">Order Details</span></span></div><div class="td" style="left:832px;width:224px"><svg class="lk" width="13" height="16" viewBox="0 0 13 16"><rect x="0" y="7.6" width="13" height="8.4" rx="0.9" fill="#3a3a3a"/><path d="M2.9 8V5.1A3.6 3.6 0 0 1 10.1 5.1V8" fill="none" stroke="#3a3a3a" stroke-width="2.4"/></svg><span class="a4">2025-11-13 17:06:3...</span></div><div class="td" style="left:1056px;width:297px"><svg class="lk" width="13" height="16" viewBox="0 0 13 16"><rect x="0" y="7.6" width="13" height="8.4" rx="0.9" fill="#3a3a3a"/><path d="M2.9 8V5.1A3.6 3.6 0 0 1 10.1 5.1V8" fill="none" stroke="#3a3a3a" stroke-width="2.4"/></svg><span class="a5">2025-11-13 17:11:10</span> <u class="a5e">(Enable)</u></div><div class="td" style="left:1353px;width:140px"><span class="a6">Completed</span></div><div class="td" style="left:1493px;width:112px"><span class="a7"></span></div><div class="td" style="left:1605px;width:60px"><svg class="lk" width="13" height="16" viewBox="0 0 13 16"><rect x="0" y="7.6" width="13" height="8.4" rx="0.9" fill="#3a3a3a"/><path d="M2.9 8V5.1A3.6 3.6 0 0 1 10.1 5.1V8" fill="none" stroke="#3a3a3a" stroke-width="2.4"/></svg><span class="a8">45</span></div></div>
</div>
</div>
<div id="vs">
<svg class="ic" style="left:3px;top:4px" width="9" height="7" viewBox="0 0 9 7"><path d="M4.5 0.300L8.700 6.400Q8.700 6.900 8.200 6.900H0.800Q0.300 6.900 0.300 6.400Z" fill="#8b8b8b"/></svg>
<div class="thumb" style="left:3px;top:17px;width:8.5px;height:497.5px"></div>
<svg class="ic" style="left:3px;top:890px" width="9" height="7" viewBox="0 0 9 7"><path d="M4.5 6.700L8.700 0.600Q8.700 0.100 8.200 0.100H0.800Q0.300 0.100 0.300 0.600Z" fill="#8b8b8b"/></svg>
</div>
<div id="hs">
<svg class="ic" style="left:4px;top:3px" width="8" height="9" viewBox="0 0 8 9"><path d="M0.300 4.500L6.400 0.300Q6.900 0.300 6.900 0.800V8.200Q6.900 8.700 6.400 8.700Z" fill="#8b8b8b"/></svg>
<div class="thumb" style="left:18px;top:3.2px;width:201px;height:8.800px"></div>
<svg class="ic" style="left:1892px;top:3px" width="8" height="9" viewBox="0 0 8 9"><path d="M7.700 4.500L1.600 0.300Q1.100 0.300 1.100 0.800V8.200Q1.100 8.700 1.600 8.700Z" fill="#8b8b8b"/></svg>
</div>
</body>
</html>
